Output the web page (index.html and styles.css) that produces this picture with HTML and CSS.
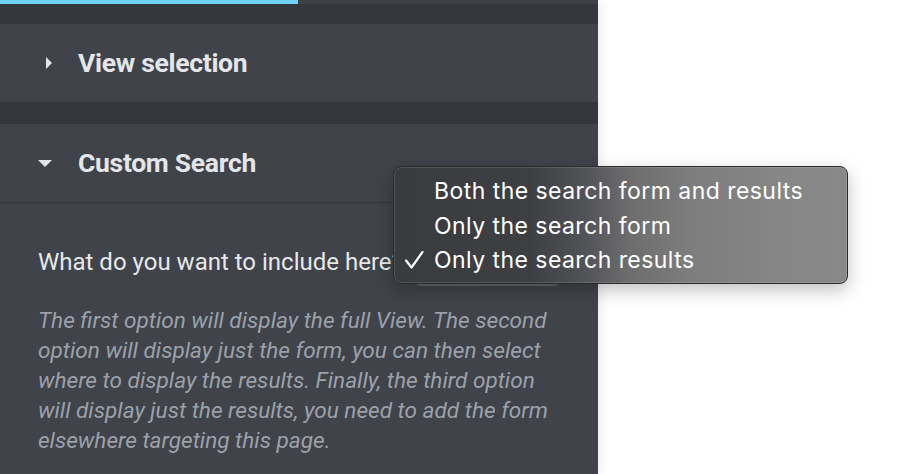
FILE: index.html
```html
<!DOCTYPE html>
<html>
<head>
<meta charset="utf-8">
<link rel="stylesheet" href="styles.css">
</head>
<body>
<div class="panel">
  <div class="progress"><div class="progress-fill"></div></div>
  <div class="band band-top"></div>
  <div class="section">
    <div class="section-head">
      <span class="caret caret-right"></span>
      <span class="section-title">View selection</span>
    </div>
  </div>
  <div class="band band-mid"></div>
  <div class="section">
    <div class="section-head section-head-open">
      <span class="caret caret-down"></span>
      <span class="section-title">Custom Search</span>
    </div>
    <div class="section-body">
      <div class="field-row">
        <span class="field-label">What do you want to include here?</span>
        <span class="select-box"></span>
      </div>
      <p class="help">The first option will display the full View. The second option will display just the form, you can then select where to display the results. Finally, the third option will display just the results, you need to add the form elsewhere targeting this page.</p>
    </div>
  </div>
</div>
<div class="menu">
  <div class="menu-item"><span class="check"></span>Both the search form and results</div>
  <div class="menu-item"><span class="check"></span>Only the search form</div>
  <div class="menu-item"><span class="check"><svg width="20" height="18" viewBox="0 0 20 18"><path d="M2 9.5 L7.5 16.5 L18.5 1" fill="none" stroke="#ffffff" stroke-width="2.2" stroke-linecap="round" stroke-linejoin="round"/></svg></span>Only the search results</div>
</div>
</body>
</html>
```
FILE: styles.css
```css
html, body {
  margin: 0;
  padding: 0;
  background: #ffffff;
  width: 912px;
  height: 474px;
  overflow: hidden;
  font-family: Roboto, "Liberation Sans", sans-serif;
}
.panel {
  width: 598px;
  height: 474px;
  background: #404349;
  box-shadow: 0 0 12px rgba(0,0,0,0.12);
}
.progress {
  height: 4px;
  background: #3d4046;
}
.progress-fill {
  width: 298px;
  height: 4px;
  background: #6fd3f5;
}
.band {
  background: #34373c;
}
.band-top { height: 20px; }
.band-mid { height: 22px; }
.section-head {
  height: 78px;
  display: flex;
  align-items: center;
  padding-left: 38px;
}
.section-head-open {
  border-bottom: 1px solid #34373c;
}
.section-head-open .section-title {
  margin-top: -2px;
}
.caret {
  width: 14px;
  height: 14px;
  display: flex;
  align-items: center;
  justify-content: center;
  margin-right: 26px;
}
.caret-right {
  justify-content: flex-start;
}
.caret-right::before {
  content: "";
  border-left: 6px solid #e3e5e8;
  border-top: 6px solid transparent;
  border-bottom: 6px solid transparent;
  margin-left: 8px;
}
.caret-down::before {
  content: "";
  border-top: 7px solid #e3e5e8;
  border-left: 7px solid transparent;
  border-right: 7px solid transparent;
}
.section-title {
  font-size: 26.5px;
  font-weight: 700;
  color: #e4e6e9;
  letter-spacing: -0.3px;
  margin-top: -2px;
}
.section-body {
  padding: 0 38px 0 38px;
}
.field-row {
  display: flex;
  align-items: center;
  height: 48px;
  margin-top: 35px;
}
.field-label {
  font-size: 24px;
  color: #e6e8ea;
  white-space: nowrap;
}
.select-box {
  flex: none;
  width: 145px;
  height: 48px;
  margin-left: 12px;
  border: 1px solid #5e6167;
  border-bottom: 2px solid #62656b;
  border-radius: 6px;
  box-sizing: border-box;
}
.help {
  margin: 20px 0 0 0;
  font-size: 22.6px;
  line-height: 30px;
  font-style: italic;
  color: #9ca1a9;
}
.menu {
  position: absolute;
  left: 393px;
  top: 166px;
  width: 455px;
  height: 118px;
  box-sizing: border-box;
  border: 1px solid #2a2b2d;
  border-radius: 8px;
  background: linear-gradient(90deg, #393b3f 0%, #3d3f43 30%, #525357 42%, #6d6d6e 52%, #7d7d7d 65%, #868686 85%, #898989 100%);
  box-shadow: 0 6px 18px rgba(0,0,0,0.25), inset 0 0 0 1px rgba(255,255,255,0.12);
  padding-top: 7px;
  font-family: Inter, "Liberation Sans", sans-serif;
}
.menu-item {
  display: flex;
  align-items: center;
  height: 34.5px;
  font-size: 23px;
  letter-spacing: 0.45px;
  color: #ffffff;
}
.check {
  width: 40px;
  padding-left: 10px;
  box-sizing: border-box;
  flex: none;
  display: flex;
  align-items: center;
}
```
